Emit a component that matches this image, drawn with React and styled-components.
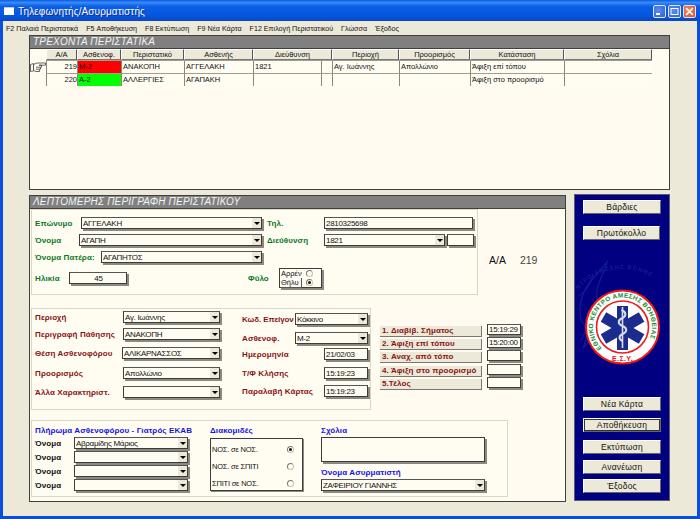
import React from 'react'
import styled, { createGlobalStyle } from 'styled-components'

const menu = ['F2 Παλαιά Περιστατικά', 'F5 Αποθήκευση', 'F8 Εκτύπωση', 'F9 Νέα Κάρτα', 'F12 Επιλογή Περιστατικού', 'Γλώσσα', 'Έξοδος']
const columns = ['Α/Α', 'Ασθενοφ.', 'Περιστατικό', 'Ασθενής', 'Διεύθυνση', 'Περιοχή', 'Προορισμός', 'Κατάσταση', 'Σχόλια']
const rows = [
  { id: 219, unit: 'Μ-2', color: '#ff0000', incident: 'ΑΝΑΚΟΠΗ', patient: 'ΑΓΓΕΛΑΚΗ', address: '1821', area: 'Αγ. Ιωάννης', dest: 'Απολλώνιο', status: 'Άφιξη επί τόπου' },
  { id: 220, unit: 'Α-2', color: '#00ff00', incident: 'ΑΛΛΕΡΓΙΕΣ', patient: 'ΑΓΑΠΑΚΗ', address: '', area: '', dest: '', status: 'Άφιξη στο προορισμό' },
]
const stages = [
  ['1. Διαβίβ. Σήματος', '15:19:29'],
  ['2. Άφιξη επί τόπου', '15:20:00'],
  ['3. Αναχ. από τόπο', ''],
  ['4. Άφιξη στο προορισμό', ''],
  ['5.Τέλος', ''],
]
const green = '#0a7a1e'
const red = '#8a1414'
const ink = '#111'

const GlobalStyle = createGlobalStyle`
  html, body { margin: 0; padding: 0; background: #ece9d8; }
  * { box-sizing: border-box; }
`

const Win = styled.div`
  width: 700px;
  height: 519px;
  display: flex;
  flex-direction: column;
  overflow: hidden;
  background: #0a4fdc;
  font-family: "Liberation Sans", Arial, sans-serif;
  font-size: 8px;
  color: #111;
`
const TitleBar = styled.div`
  height: 21px;
  flex: none;
  display: flex;
  align-items: center;
  padding: 1px 4px 0 4px;
  background: linear-gradient(180deg, #0a5be8 0%, #3a8bf5 12%, #0b5fe6 30%, #0554dc 80%, #0a48c0 100%);
`
const TitleIcon = styled.div`
  width: 10px;
  height: 8px;
  background: #fff;
  border-top: 1px solid #b8c8f0;
  margin-right: 4px;
`
const TitleText = styled.div`
  flex: 1;
  color: #fff;
  font-size: 10px;
  letter-spacing: 0.1px;
  padding-top: 1px;
  text-shadow: 1px 1px 0 #0a2f90;
`
const WinBtn = styled.div`
  width: 13px;
  height: 13px;
  margin-left: 2px;
  border: 1px solid #dfe8fb;
  border-radius: 2px;
  background: ${p => (p.$close ? 'radial-gradient(circle at 40% 40%, #f0906c, #d8471f)' : 'radial-gradient(circle at 40% 40%, #5c8ef0, #2a5fdc)')};
  display: flex;
  align-items: center;
  justify-content: center;
  svg { display: block; }
`
const Client = styled.div`
  flex: 1;
  min-height: 0;
  margin: 0 3px 3px 3px;
  background: #ece9d8;
  display: flex;
  flex-direction: column;
`
const MenuBar = styled.div`
  height: 13px;
  flex: none;
  display: flex;
  align-items: center;
  gap: 8px;
  padding: 3px 0 0 3px;
  font-size: 7.15px;
`
const Panel = styled.section`
  border: 1px solid #404040;
  background: #fffbf0;
  margin-left: ${p => p.$left || 0}px;
  width: ${p => p.$width}px;
  height: ${p => p.$height}px;
`
const PanelHead = styled.div`
  height: 13px;
  background: #808080;
  border-bottom: 1px solid #404040;
  color: #f4f4f4;
  font-size: 10px;
  font-style: italic;
  line-height: 12px;
  padding-left: 3px;
  letter-spacing: 0.2px;
`
const TopWrap = styled.div`
  margin-top: 1px;
`
const TableWrap = styled.div`
  display: flex;
`
const Pointer = styled.div`
  width: 16px;
  flex: none;
  padding-top: 13px;
  svg { display: block; }
`
const Table = styled.div`
  display: grid;
  grid-template-columns: 31px 44px 63px 69px 79px 67px 71px 94px 88px;
  grid-auto-rows: min-content;
`
const HeadCell = styled.div`
  height: 11px;
  background: #ece9d8;
  border-top: 1px solid #fff;
  border-left: 1px solid #fff;
  border-right: 1px solid #555;
  border-bottom: 1px solid #777;
  text-align: center;
  line-height: 9px;
  font-size: 7.5px;
`
const Cell = styled.div`
  height: 13px;
  background: ${p => p.$bg || '#fffcf2'};
  border-top: 1px solid #a09e8c;
  border-left: 1px solid #8a8878;
  line-height: 12px;
  padding-left: 1px;
  white-space: nowrap;
  overflow: hidden;
  font-size: 7.5px;
  display: flex;
  justify-content: ${p => (p.$num ? 'flex-end' : 'flex-start')};
`
const CellPart = styled.span`
  flex: 1;
`
const CellStub = styled.span`
  width: 11px;
  flex: none;
  border-left: 1px solid #8a8878;
`
const Bottom = styled.div`
  display: flex;
  margin-top: 5px;
`
const FormBody = styled.div`
  padding-left: 1px;
  display: flex;
  flex-direction: column;
`
const FormRow = styled.div`
  display: flex;
  margin-top: ${p => p.$top || 0}px;
`
const Group = styled.div`
  width: ${p => p.$width}px;
  height: ${p => p.$height}px;
  flex: none;
  background: #fffcf2;
  border: 1px solid #d8d6c4;
  padding-left: 3px;
`
const Line = styled.div`
  display: flex;
  align-items: center;
  margin-top: ${p => p.$top || 0}px;
`
const Label = styled.div`
  width: ${p => p.$width}px;
  flex: none;
  margin-left: ${p => p.$left || 0}px;
  font-weight: bold;
  font-size: 8px;
  letter-spacing: ${p => (p.$tight ? '-0.1px' : '0.1px')};
  white-space: nowrap;
  color: ${p => p.$color};
`
const Box = styled.div`
  width: ${p => p.$width}px;
  height: ${p => p.$height || 12}px;
  flex: none;
  background: #fffcf2;
  border: 1px solid #3c3c3c;
  border-top-color: #555;
  box-shadow: 2px 2px 0 #8c8a80;
  display: flex;
  align-items: center;
  overflow: hidden;
  padding-left: 1px;
  font-size: 8px;
  letter-spacing: -0.3px;
  white-space: nowrap;
  margin-left: ${p => p.$left || 0}px;
  justify-content: ${p => (p.$center ? 'center' : 'flex-start')};
`
const BoxText = styled.span`
  flex: 1;
  overflow: hidden;
`
const ArrowBtn = styled.span`
  width: 10px;
  height: 100%;
  flex: none;
  background: #ece9d8;
  border-left: 1px solid #fff;
  display: flex;
  align-items: center;
  justify-content: center;
  &::after {
    content: '';
    border-left: 3px solid transparent;
    border-right: 3px solid transparent;
    border-top: 3px solid #000;
  }
`
const Combo = ({ width, left, value }) => (
  <Box $width={width} $left={left}>
    <BoxText>{value}</BoxText>
    <ArrowBtn />
  </Box>
)
const GenderBox = styled.div`
  width: 43px;
  height: 20px;
  border: 1px solid #3c3c3c;
  box-shadow: 2px 2px 0 #8c8a80;
  background: #fffcf2;
  padding-left: 1px;
  font-size: 7.5px;
  line-height: 9px;
`
const OptionLine = styled.div`
  display: flex;
  align-items: center;
  justify-content: space-between;
  padding-right: ${p => p.$pad || 8}px;
  height: ${p => p.$height || 9}px;
`
const GenderText = styled.span`
  ${p => p.$boxed && 'border-right: 1px solid #555; border-bottom: 1px solid #555; padding-right: 2px;'}
`
const Radio = styled.span`
  width: 7px;
  height: 7px;
  flex: none;
  border-radius: 50%;
  background: #fffcf2;
  border: 1px solid #c4c2b4;
  border-left-color: #777;
  border-top-color: #777;
  position: relative;
  &::after {
    content: '';
    display: ${p => (p.$on ? 'block' : 'none')};
    position: absolute;
    left: 1px;
    top: 1px;
    width: 3px;
    height: 3px;
    border-radius: 50%;
    background: #111;
  }
`
const Serial = styled.div`
  margin: 45px 0 0 11px;
  display: flex;
  gap: 14px;
  align-items: baseline;
  height: 14px;
  font-size: 10.5px;
  color: #444;
`
const SerialKey = styled.span`
  color: #111;
`
const Column = styled.div`
  display: flex;
  flex-direction: column;
  flex: none;
  width: ${p => (p.$width ? `${p.$width}px` : 'auto')};
  margin-left: ${p => p.$left || 0}px;
  padding-top: ${p => p.$pad || 0}px;
`
const Split = styled.div`
  display: flex;
`
const StageList = styled.div`
  margin: 16px 0 0 9px;
  display: grid;
  grid-template-columns: 102px 36px;
  column-gap: 5px;
  grid-auto-rows: 13.2px;
`
const StageBtn = styled.div`
  height: 11px;
  margin-top: 2px;
  background: #ece9d8;
  border-right: 1px solid #777;
  border-bottom: 1px solid #777;
  color: ${red};
  font-weight: bold;
  font-size: 8px;
  letter-spacing: 0.1px;
  line-height: 10px;
  padding-left: 2px;
  white-space: nowrap;
`
const GroupTitle = styled.div`
  color: #1414e6;
  font-weight: bold;
  font-size: 8px;
  letter-spacing: 0.1px;
  height: 11px;
  line-height: 11px;
  white-space: nowrap;
  margin-top: ${p => p.$top || 0}px;
`
const TransferBox = styled.div`
  width: 93px;
  height: 53px;
  margin-top: 2px;
  border: 1px solid #3c3c3c;
  box-shadow: 1px 1px 0 #8c8a80;
  padding: 1px 0 0 1px;
  font-size: 7.5px;
  letter-spacing: -0.2px;
`
const NotesBox = styled.div`
  width: 164px;
  height: 25px;
  margin: 1px 0 5px;
  border: 1px solid #3c3c3c;
  box-shadow: 2px 2px 0 #8c8a80;
`
const SidePanel = styled.aside`
  margin: -1px 0 0 8px;
  width: 96px;
  height: 307px;
  background: #000080;
  border: 1px solid #5c5c70;
  display: flex;
  flex-direction: column;
  padding: 5px 0 0 8px;
`
const SideBtn = styled.div`
  width: ${p => p.$width || 78}px;
  height: 14px;
  margin-top: ${p => p.$top || 0}px;
  background: #ece9d8;
  color: #111;
  border-top: 1px solid #fff;
  border-left: 1px solid #fff;
  border-right: 1px solid #666;
  border-bottom: 1px solid #666;
  font-size: 8.5px;
  line-height: 12px;
  letter-spacing: 0.2px;
  text-align: center;
  ${p => p.$focus && 'outline: 1px solid #333; outline-offset: -2px;'}
`
const LogoSvg = styled.svg`
  display: block;
  margin-left: -8px;
  width: 94px;
  height: 157px;
  flex: none;
`

const Hand = () => (
  <svg width="16" height="11" viewBox="0 0 16 11" fill="#fffbf0" stroke="#444" strokeWidth="0.8">
    <path d="M0.5 2.5 L3.5 1.5 L3.5 9 L0.5 9.5 Z" />
    <path d="M3.5 2.5 L7 1 L15.5 1 L15.5 3.2 L9 3.2 L11.5 3.2 L11.5 5.2 L10.5 5.2 L10.5 7.2 L9.5 7.2 L9.5 9.5 L6 9.5 L3.5 8.5 Z" />
    <path d="M6 5.2 L10.5 5.2 M6 7.2 L9.5 7.2" />
  </svg>
)

const Logo = () => (
  <LogoSvg viewBox="0 0 94 157">
    <defs>
      <path id="ringText" d="M 27.5 108.7 A 29.5 29.5 0 1 1 67.5 108.7" />
      <path id="ghostText" d="M 3 49.8 A 58 58 0 0 1 92 49.8" />
    </defs>
    <text fontFamily="Liberation Sans, sans-serif" fontSize="5.8" fontWeight="bold" fill="#121d94" letterSpacing="1">
      <textPath href="#ghostText">ΝΤΡΟ ΑΜΕΣΗΣ ΒΟΗΘΕ</textPath>
    </text>
    <path d="M 6 80 C 2 60 10 48 20 36 C 26 30 30 24 32 22 C 30 32 24 40 22 50 C 20 62 28 70 24 84 C 20 96 12 104 8 108 C 14 94 12 88 6 80 Z" fill="none" stroke="#121d94" strokeWidth="1.2" />
    <path d="M 4 56 C 12 50 16 44 18 34 M 14 70 C 10 82 12 92 6 100" fill="none" stroke="#121d94" strokeWidth="1" />
    <g transform="translate(47.5 87)">
      <circle r="36.5" fill="#fff" stroke="#f01818" strokeWidth="2" />
      <circle r="26" fill="#fff" stroke="#f01818" strokeWidth="1.6" />
      <g fill="#1c2c8c" transform="translate(0 1)">
        <rect x="-5.5" y="-22" width="11" height="44" />
        <rect x="-5.5" y="-22" width="11" height="44" transform="rotate(60)" />
        <rect x="-5.5" y="-22" width="11" height="44" transform="rotate(120)" />
      </g>
      <rect x="-0.8" y="-20" width="1.6" height="41" fill="#d8dce8" />
      <path d="M -1 -17 C 4 -15 4 -11 0 -9 C -5 -7 -5 -3 0 -1 C 5 1 5 5 0 7 C -4 9 -4 12 0 14" fill="none" stroke="#d8dce8" strokeWidth="2" />
    </g>
    <text fontFamily="Liberation Sans, sans-serif" fontSize="6.4" fontWeight="bold" fill="#128a30" letterSpacing="0.35">
      <textPath href="#ringText" startOffset="1">ΕΘΝΙΚΟ ΚΕΝΤΡΟ ΑΜΕΣΗΣ ΒΟΗΘΕΙΑΣ</textPath>
    </text>
    <text x="47.5" y="120.5" textAnchor="middle" fontFamily="Liberation Sans, sans-serif" fontSize="7" fontWeight="bold" fill="#e01818" letterSpacing="0.4">Ε.Σ.Υ.</text>
  </LogoSvg>
)

export default function App() {
  return (
    <Win>
      <GlobalStyle />
      <TitleBar>
        <TitleIcon />
        <TitleText>Τηλεφωνητής/Ασυρματιστής</TitleText>
        <WinBtn>
          <svg width="9" height="9" viewBox="0 0 9 9"><rect x="1" y="6" width="4" height="2" fill="#fff" /></svg>
        </WinBtn>
        <WinBtn>
          <svg width="9" height="9" viewBox="0 0 9 9"><rect x="1" y="1.5" width="7" height="6" fill="none" stroke="#fff" /></svg>
        </WinBtn>
        <WinBtn $close>
          <svg width="9" height="9" viewBox="0 0 9 9"><path d="M1 1 L8 8 M8 1 L1 8" stroke="#fff" strokeWidth="1.6" /></svg>
        </WinBtn>
      </TitleBar>
      <Client>
        <MenuBar>
          {menu.map(m => <span key={m}>{m}</span>)}
        </MenuBar>
        <TopWrap>
          <Panel $left={26} $width={641} $height={155}>
            <PanelHead>ΤΡΕΧΟΝΤΑ ΠΕΡΙΣΤΑΤΙΚΑ</PanelHead>
            <TableWrap>
              <Pointer><Hand /></Pointer>
              <Table>
                {columns.map(c => <HeadCell key={c}>{c}</HeadCell>)}
                {rows.map(r => (
                  <React.Fragment key={r.id}>
                    <Cell $num>{r.id}</Cell>
                    <Cell $bg={r.color}>{r.unit}</Cell>
                    <Cell>{r.incident}</Cell>
                    <Cell>{r.patient}</Cell>
                    <Cell><CellPart>{r.address}</CellPart><CellStub /></Cell>
                    <Cell>{r.area}</Cell>
                    <Cell>{r.dest}</Cell>
                    <Cell>{r.status}</Cell>
                    <Cell />
                  </React.Fragment>
                ))}
              </Table>
            </TableWrap>
          </Panel>
        </TopWrap>
        <Bottom>
          <Panel $left={26} $width={537} $height={307}>
            <PanelHead>ΛΕΠΤΟΜΕΡΗΣ ΠΕΡΙΓΡΑΦΗ ΠΕΡΙΣΤΑΤΙΚΟΥ</PanelHead>
            <FormBody>
              <FormRow>
                <Group $width={447} $height={86}>
                  <Line $top={7}>
                    <Label $width={46} $color={green}>Επώνυμο</Label>
                    <Combo width={181} value="ΑΓΓΕΛΑΚΗ" />
                    <Label $width={57} $left={5} $color={green}>Τηλ.</Label>
                    <Box $width={149}>2810325698</Box>
                  </Line>
                  <Line $top={5}>
                    <Label $width={44} $color={green}>Όνομα</Label>
                    <Combo width={183} value="ΑΓΑΠΗ" />
                    <Label $width={57} $left={5} $color={green}>Διεύθυνση</Label>
                    <Combo width={121} value="1821" />
                    <Box $width={27} $left={2} />
                  </Line>
                  <Line $top={5}>
                    <Label $width={66} $color={green}>Όνομα Πατέρα:</Label>
                    <Combo width={161} value="ΑΓΑΠΗΤΟΣ" />
                  </Line>
                  <Line $top={5}>
                    <Label $width={34} $color={green}>Ηλικία</Label>
                    <Box $width={58} $center>45</Box>
                    <Label $width={31} $left={121} $color={green}>Φύλο</Label>
                    <GenderBox>
                      <OptionLine><GenderText>Αρρέν</GenderText><Radio /></OptionLine>
                      <OptionLine><GenderText $boxed>Θήλυ</GenderText><Radio $on /></OptionLine>
                    </GenderBox>
                  </Line>
                </Group>
                <Serial><SerialKey>Α/Α</SerialKey> 219</Serial>
              </FormRow>
              <FormRow $top={13}>
                <Group $width={340} $height={102}>
                  <Split>
                    <Column $pad={2}>
                      <Line><Label $width={88} $color={red}>Περιοχή</Label><Combo width={97} value="Αγ. Ιωάννης" /></Line>
                      <Line $top={5}><Label $width={88} $color={red}>Περιγραφή Πάθησης</Label><Combo width={97} value="ΑΝΑΚΟΠΗ" /></Line>
                      <Line $top={7}><Label $width={87} $color={red}>Θέση Ασθενοφόρου</Label><Combo width={98} value="ΑΛΙΚΑΡΝΑΣΣΟΣ" /></Line>
                      <Line $top={8}><Label $width={88} $color={red}>Προορισμός</Label><Combo width={97} value="Απολλώνιο" /></Line>
                      <Line $top={7}><Label $width={88} $color={red}>Άλλα Χαρακτηριστ.</Label><Combo width={97} /></Line>
                    </Column>
                    <Column $left={22} $pad={4}>
                      <Line><Label $width={53} $tight $color={red}>Κωδ. Επείγον</Label><Combo width={73} value="Κόκκινο" /></Line>
                      <Line $top={7}><Label $width={53} $color={red}>Ασθενοφ.</Label><Combo width={73} value="Μ-2" /></Line>
                      <Line $top={4}><Label $width={82} $color={red}>Ημερομηνία</Label><Box $width={44}>21/02/03</Box></Line>
                      <Line $top={7}><Label $width={82} $color={red}>Τ/Φ Κλήσης</Label><Box $width={44}>15:19:23</Box></Line>
                      <Line $top={6}><Label $width={82} $color={red}>Παραλαβή Κάρτας</Label><Box $width={44}>15:19:23</Box></Line>
                    </Column>
                  </Split>
                </Group>
                <StageList>
                  {stages.map(([name, time]) => (
                    <React.Fragment key={name}>
                      <StageBtn>{name}</StageBtn>
                      <Box $width={34} $height={11}>{time}</Box>
                    </React.Fragment>
                  ))}
                </StageList>
              </FormRow>
              <FormRow $top={10}>
                <Group $width={477} $height={77}>
                  <Split>
                    <Column $pad={4} $width={175}>
                      <GroupTitle>Πλήρωμα Ασθενοφόρου - Γιατρός ΕΚΑΒ</GroupTitle>
                      <Line $top={1}><Label $width={39} $color={ink}>Όνομα</Label><Combo width={114} value="Αβραμίδης Μάριος" /></Line>
                      <Line $top={2}><Label $width={39} $color={ink}>Όνομα</Label><Combo width={114} /></Line>
                      <Line $top={2}><Label $width={39} $color={ink}>Όνομα</Label><Combo width={114} /></Line>
                      <Line $top={2}><Label $width={39} $color={ink}>Όνομα</Label><Combo width={114} /></Line>
                    </Column>
                    <Column $pad={4} $width={93}>
                      <GroupTitle>Διακομιδές</GroupTitle>
                      <TransferBox>
                        <OptionLine $height={18}>ΝΟΣ. σε ΝΟΣ. <Radio $on /></OptionLine>
                        <OptionLine $height={17}>ΝΟΣ. σε ΣΠΙΤΙ <Radio /></OptionLine>
                        <OptionLine $height={17}>ΣΠΙΤΙ σε ΝΟΣ. <Radio /></OptionLine>
                      </TransferBox>
                    </Column>
                    <Column $left={18} $pad={4}>
                      <GroupTitle>Σχόλια</GroupTitle>
                      <NotesBox />
                      <GroupTitle>Όνομα Ασυρματιστή</GroupTitle>
                      <Line $top={1}><Combo width={164} value="ΖΑΦΕΙΡΙΟΥ ΓΙΑΝΝΗΣ" /></Line>
                    </Column>
                  </Split>
                </Group>
              </FormRow>
            </FormBody>
          </Panel>
          <SidePanel>
            <SideBtn>Βάρδιες</SideBtn>
            <SideBtn $top={12} $width={77}>Πρωτόκολλο</SideBtn>
            <Logo />
            <SideBtn>Νέα Κάρτα</SideBtn>
            <SideBtn $top={7} $focus>Αποθήκευση</SideBtn>
            <SideBtn $top={8}>Εκτύπωση</SideBtn>
            <SideBtn $top={6}>Ανανέωση</SideBtn>
            <SideBtn $top={5}>Έξοδος</SideBtn>
          </SidePanel>
        </Bottom>
      </Client>
    </Win>
  )
}
